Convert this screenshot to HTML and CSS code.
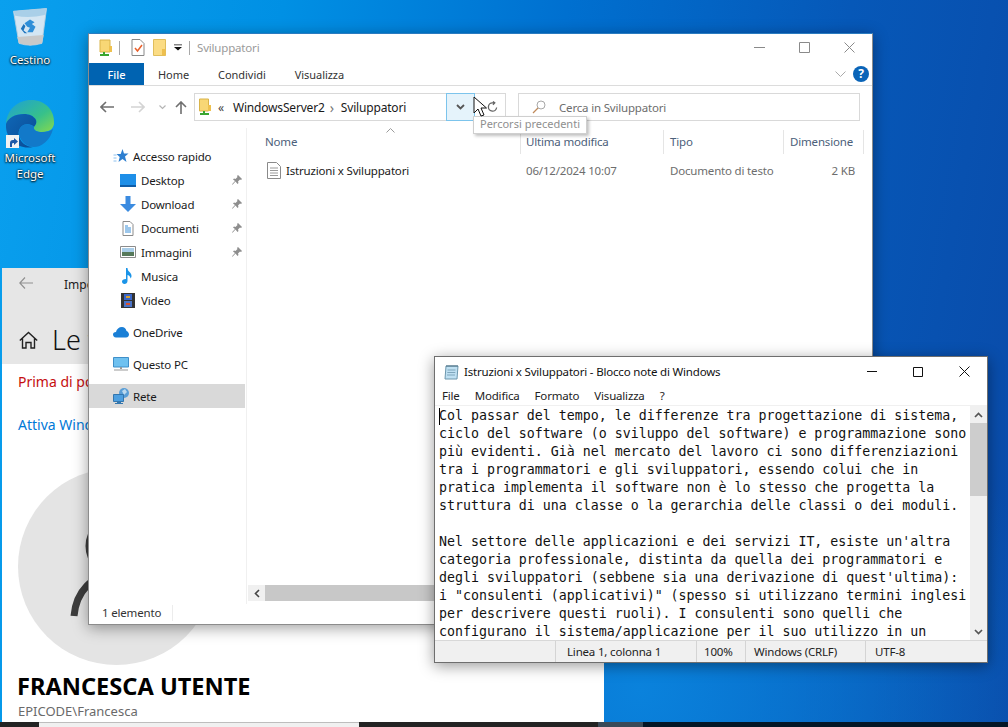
FILE: index.html
```html
<!DOCTYPE html>
<html lang="it">
<head>
<meta charset="utf-8">
<title>Desktop</title>
<link rel="stylesheet" href="styles.css">
</head>
<body>
<div class="desktop">

  <div class="dicon cestino">
    <svg width="40" height="44" viewBox="0 0 40 48"><path d="M2 9 L38 6 L33 44 Q20 48 8 44Z" fill="#d4e6f3" stroke="#b7cfe0"/><path d="M2 9 L38 6 L36 13 Q20 17 4 14Z" fill="#a9cfe8"/><path d="M6 37 L35 35 L33 44 Q20 48 8 44Z" fill="#c9c9c9"/><path d="M14 22l6-4 5 3-3 2 4 3-3 6h-6l3-5-3-1z" fill="#2f8fd8"/><path d="M13 30l4 3h-3l-4-5 3-5 2 2z" fill="#1f74bd"/></svg>
    <span>Cestino</span>
  </div>

  <div class="dicon edge">
    <svg width="50" height="50" viewBox="0 0 50 50"><defs><linearGradient id="eg1" x1="0" y1="0" x2="1" y2="1"><stop offset="0" stop-color="#1d9fd8"/><stop offset="0.6" stop-color="#37c18a"/><stop offset="1" stop-color="#86d94e"/></linearGradient><linearGradient id="eg2" x1="0" y1="0" x2="1" y2="1"><stop offset="0" stop-color="#0f67b6"/><stop offset="1" stop-color="#0a4a94"/></linearGradient></defs><path d="M1 24C2 9 13 0 26 0c14 0 24 10 23 24-1 6-6 8-12 8-5 0-9-2-8-5 1-2 3-3 2-7-2-4-7-6-12-6C10 14 3 18 1 24z" fill="url(#eg1)"/><path d="M1 24C3 18 10 14 19 14c5 0 10 2 12 6 1 4-1 5-2 7-3-3-9-4-13 0-4 4-3 12 3 17 3 2 6 3 9 3C14 50 0 40 1 24z" fill="url(#eg2)"/><path d="M16 27c4-4 10-3 13 0-1 3 3 5 8 5 5 0 9-1 11-3-3 12-12 18-19 18-3 0-6-1-9-3-6-5-8-13-4-17z" fill="#1279c9"/></svg>
    <span class="badge"><svg width="12" height="12" viewBox="0 0 12 12"><path d="M3 11V7c0-2 1-3 3-3h1V2l4 3.500-4 3.500V7H6c-1 0-1 1-1 2v2z" fill="#1e5aa8"/></svg></span>
    <span>Microsoft<br>Edge</span>
  </div>

  <section class="settings">
    <div class="set-top">
      <div class="set-title"><svg class="set-back" width="14" height="12" viewBox="0 0 14 12"><path d="M6 .5.800 6 6 11.500M1 6h13" fill="none" stroke="#8f8f8f" stroke-width="1.100"/></svg><span class="set-app">Impo</span></div>
      <div class="set-head">
        <svg width="19" height="18" viewBox="0 0 19 18" fill="none" stroke="#222" stroke-width="1.400"><path d="M.8 9.500 9.500 1.500l8.700 8M3.500 7.500V17H7v-5.500h5V17h3.500V7.500"/></svg>
        <span class="set-h1">Le t</span>
      </div>
    </div>
    <div class="set-body">
      <p class="set-warn">Prima di po</p>
      <p class="set-link">Attiva Wind</p>
      <div class="avatar">
        <svg width="197" height="197" viewBox="0 0 197 197" fill="none" stroke="#3d3d3d"><circle cx="98" cy="78" r="29" stroke-width="3"/><path d="M56 148c2-24 18-42 42-42s40 18 42 42" stroke-width="7"/></svg>
      </div>
      <div class="set-name">FRANCESCA UTENTE</div>
      <div class="set-acct">EPICODE\Francesca</div>
    </div>
  </section>

  <section class="explorer">
    <div class="ex-title">
      <svg width="14" height="18" viewBox="0 0 14 18"><path d="M1 1h10v12H1z" fill="#f8d775" stroke="#d9b44a"/><path d="M10 7h3v6h-3z" fill="#eec14f"/><path d="M5 13v2M1 16h9" stroke="#3aa52f" stroke-width="2"/></svg>
      <i class="ex-sep"></i>
      <svg width="14" height="17" viewBox="0 0 14 17"><path d="M1 .5h8l4 4v12H1z" fill="#fff" stroke="#888"/><path d="M4 9l2.500 3L11 6" fill="none" stroke="#e8602c" stroke-width="1.500"/></svg>
      <svg class="ex-folder" width="13" height="17" viewBox="0 0 13 17"><path d="M.5.500h12v16H.5z" fill="#fbdc84" stroke="#e0be5c"/><path d="M9 10h3.500v6.500H9z" fill="#eebf4e"/></svg>
      <svg class="ex-drop" width="8" height="7" viewBox="0 0 9 7"><path d="M0 0h9v1H0zM0 3h9L4.500 7z" fill="#111"/></svg>
      <i class="ex-sep sep2"></i>
      <span class="ex-name">Sviluppatori</span>
      <div class="win-btns dim">
        <svg width="11" height="11" viewBox="0 0 11 11"><path d="M0 5.500h11" stroke="#8a8a8a"/></svg>
        <svg width="11" height="11" viewBox="0 0 11 11"><path d="M.5.500h10v10H.5z" fill="none" stroke="#8a8a8a"/></svg>
        <svg width="11" height="11" viewBox="0 0 11 11"><path d="M.5.500l10 10M10.500.500l-10 10" stroke="#8a8a8a"/></svg>
      </div>
    </div>
    <div class="ex-tabs">
      <span class="tab-file">File</span>
      <span class="tab">Home</span>
      <span class="tab">Condividi</span>
      <span class="tab">Visualizza</span>
      <svg class="ribbon-caret" width="11" height="6" viewBox="0 0 11 6"><path d="M.5.500l5 5 5-5" fill="none" stroke="#aaa"/></svg>
      <span class="help">?</span>
    </div>
    <div class="ex-addr">
      <svg class="nav-a" width="14" height="12" viewBox="0 0 14 12"><path d="M6 1 1 6l5 5M1 6h13" fill="none" stroke="#6f6f6f" stroke-width="1.600"/></svg>
      <svg class="nav-b" width="14" height="12" viewBox="0 0 14 12"><path d="M8 1l5 5-5 5M13 6H0" fill="none" stroke="#d4d4d4" stroke-width="1.600"/></svg>
      <svg class="nav-c" width="7" height="5" viewBox="0 0 7 5"><path d="M.5.500l3 3 3-3" fill="none" stroke="#b5b5b5" stroke-width="1.200"/></svg>
      <svg class="nav-d" width="12" height="13" viewBox="0 0 12 13"><path d="M1 6l5-5 5 5M6 1v12" fill="none" stroke="#6f6f6f" stroke-width="1.600"/></svg>
      <div class="addr-box">
        <svg width="13" height="18" viewBox="0 0 13 18"><path d="M.5 1h9v12h-9z" fill="#f8d775" stroke="#d9b44a"/><path d="M9 7h3v6H9z" fill="#eec14f"/><path d="M5 13v2M1 16h9" stroke="#3aa52f" stroke-width="2"/></svg>
        <span class="chev">«</span>
        <span class="crumb">WindowsServer2</span>
        <span class="crumb-sep">›</span>
        <span class="crumb crumb2">Sviluppatori</span>
        <span class="addr-drop"><svg width="9" height="6" viewBox="0 0 9 6"><path d="M1 1l3.500 3.500L8 1" fill="none" stroke="#555" stroke-width="1.800"/></svg></span>
        <span class="addr-refresh"><svg width="11" height="12" viewBox="0 0 12 12"><path d="M10.500 6.500A4.500 4.500 0 1 1 6 1.500h2M6.500 0l2 1.500-2 2" fill="none" stroke="#666" stroke-width="1.400"/></svg></span>
      </div>
      <div class="search-box">
        <svg width="14" height="14" viewBox="0 0 14 14"><circle cx="9" cy="5" r="4" fill="none" stroke="#a8a8a8"/><path d="M6 8l-5 5" stroke="#c08a5a" stroke-width="1.200"/></svg>
        <span>Cerca in Sviluppatori</span>
      </div>
    </div>
    <div class="ex-main">
      <nav class="ex-nav">
        <div class="nav-row lvl1"><svg width="16" height="14" viewBox="0 0 15 14"><path d="M9 0l1.500 4.500H15L11.500 7.500 13 13 9 10l-4 3 1.200-5L3 5h4.200z" fill="#2d7fd0"/><path d="M0 6h3M0 9h3M0 12h3" stroke="#8cc0ee"/></svg><span class="nl">Accesso rapido</span></div>
        <div class="nav-row lvl2"><svg width="16" height="13" viewBox="0 0 16 13"><path d="M0 0h16v11H0z" fill="#1e8fe8"/><path d="M0 11h16v2H0z" fill="#0f5da8"/></svg><span class="nl">Desktop</span><svg class="pin" width="10" height="10" viewBox="0 0 10 10"><path d="M6 0l4 4-1 1-1-.5L6 6.500 6.500 8 5.500 9 3.500 6.500 .5 9.800 0 9.300 3 6 1 4.500l1-1L3.500 4 5.500 2 5 1z" fill="#8e8e8e"/></svg></div>
        <div class="nav-row lvl2"><svg width="16" height="16" viewBox="0 0 16 16"><path d="M5.500 0h5v8H16l-8 8-8-8h5.500z" fill="#3b8be0"/></svg><span class="nl">Download</span><svg class="pin" width="10" height="10" viewBox="0 0 10 10"><path d="M6 0l4 4-1 1-1-.5L6 6.500 6.500 8 5.500 9 3.500 6.500 .5 9.800 0 9.300 3 6 1 4.500l1-1L3.500 4 5.500 2 5 1z" fill="#8e8e8e"/></svg></div>
        <div class="nav-row lvl2"><svg width="16" height="15" viewBox="0 0 16 15"><path d="M3 .5h7l3 3v11H3z" fill="#fff" stroke="#8b8b8b"/><path d="M5 5h3M5 7h6M5 9h6M5 11h6" stroke="#3a8fd8"/></svg><span class="nl">Documenti</span><svg class="pin" width="10" height="10" viewBox="0 0 10 10"><path d="M6 0l4 4-1 1-1-.5L6 6.500 6.500 8 5.500 9 3.500 6.500 .5 9.800 0 9.300 3 6 1 4.500l1-1L3.500 4 5.500 2 5 1z" fill="#8e8e8e"/></svg></div>
        <div class="nav-row lvl2"><svg width="16" height="12" viewBox="0 0 16 12"><path d="M.5.500h15v11H.5z" fill="#fff" stroke="#8b8b8b"/><path d="M2 2h12v4H2z" fill="#a9cde8"/><path d="M2 6h12v4H2z" fill="#56795a"/></svg><span class="nl">Immagini</span><svg class="pin" width="10" height="10" viewBox="0 0 10 10"><path d="M6 0l4 4-1 1-1-.5L6 6.500 6.500 8 5.500 9 3.500 6.500 .5 9.800 0 9.300 3 6 1 4.500l1-1L3.500 4 5.500 2 5 1z" fill="#8e8e8e"/></svg></div>
        <div class="nav-row lvl2"><svg width="16" height="16" viewBox="0 0 16 16"><path d="M6 0h1.500c0 4 4 4 4 8 0 1-.5 2-1 2.500 0-2-2-3.500-3-3.500v6c0 2-1.500 3-3 3S2 15 2 13.500 3.500 11 6 11z" fill="#1a94e8"/></svg><span class="nl">Musica</span></div>
        <div class="nav-row lvl2"><svg width="16" height="15" viewBox="0 0 16 15"><path d="M1 0h14v15H1z" fill="#333"/><path d="M4 1h8v6H4z" fill="#3a67c8"/><path d="M4 8h8v6H4z" fill="#4b74c7"/><path d="M6 3h4v2H6z" fill="#d9a02c"/><path d="M6 10h4v2H6z" fill="#d8522c"/></svg><span class="nl">Video</span></div>
        <div class="nav-row lvl1 gap"><svg width="16" height="12" viewBox="0 0 16 12"><path d="M3 11.500C1 11.500 0 10 0 8.500 0 7 1 6 3 6c.5-3 3-5 6-5 2 0 4 1.500 4.500 4C15 5.500 16 7 16 8.500s-1 3-3 3z" fill="#1a7fd6"/></svg><span class="nl">OneDrive</span></div>
        <div class="nav-row lvl1 gap"><svg width="16" height="14" viewBox="0 0 16 14"><path d="M.5.500h15v9.500H.5z" fill="#6fc1f0" stroke="#3f8fc9"/><path d="M7 10h2v2H7zM1 12.500h14v1H1z" fill="#9a9a9a"/></svg><span class="nl">Questo PC</span></div>
        <div class="nav-row lvl1 gap sel"><svg width="16" height="16" viewBox="0 0 16 16"><circle cx="11" cy="5" r="5" fill="#5a9ed6"/><path d="M9 3l3-2 2 3-3 3z" fill="#bcd9ee"/><path d="M.5 6.500h10v7H.5z" fill="#4d9fe0" stroke="#3476ad"/><path d="M4 14h4v1H4zM2 15h8v1H2z" fill="#3476ad"/></svg><span class="nl">Rete</span></div>
      </nav>
      <div class="ex-list">
        <div class="sort-caret"><svg width="9" height="5" viewBox="0 0 9 5"><path d="M.5 4.500l4-4 4 4" fill="none" stroke="#9a9a9a"/></svg></div>
        <div class="col-head">
          <span class="col c1">Nome</span><span class="col c2">Ultima modifica</span><span class="col c3">Tipo</span><span class="col c4">Dimensione</span>
        </div>
        <div class="file-row">
          <span class="col c1 fname"><svg width="14" height="17" viewBox="0 0 14 17"><path d="M.5.500h9l4 4v12H.5z" fill="#fff" stroke="#8a8a8a"/><path d="M3 6h8M3 8.500h8M3 11h8M3 13.500h8" stroke="#9a9a9a"/></svg>Istruzioni x Sviluppatori</span>
          <span class="col c2 gray">06/12/2024 10:07</span>
          <span class="col c3 gray">Documento di testo</span>
          <span class="col c4 gray right">2 KB</span>
        </div>
        <div class="hscroll"><span class="hs-btn"><svg width="6" height="9" viewBox="0 0 6 9"><path d="M5 1 1.500 4.500 5 8" fill="none" stroke="#444" stroke-width="1.600"/></svg></span><span class="hs-thumb"></span></div>
      </div>
    </div>
    <div class="ex-status"><span>1 elemento</span></div>
  </section>

  <div class="tooltip">Percorsi precedenti</div>
  <svg class="cursor" width="15" height="21" viewBox="0 0 15 21"><path d="M1 1v16l4-4 3 7 3-1-3-7h5.500z" fill="#fff" stroke="#111"/></svg>

  <section class="notepad">
    <div class="np-title">
      <svg width="16" height="16" viewBox="0 0 16 16"><path d="M2 2h12l-1 13H1z" fill="#bfe0f2" stroke="#6d97ad"/><path d="M3 1v2M5 1v2M7 1v2M9 1v2M11 1v2M13 1v2" stroke="#4b6c80"/><path d="M3.500 6h8M3.300 8.500h8M3 11h8" stroke="#7fa6bc"/></svg>
      <span class="np-name">Istruzioni x Sviluppatori - Blocco note di Windows</span>
      <div class="win-btns">
        <svg width="10" height="10" viewBox="0 0 10 10"><path d="M0 4.500h10" stroke="#111"/></svg>
        <svg width="10" height="10" viewBox="0 0 10 10"><path d="M.5.500h9v9h-9z" fill="none" stroke="#111"/></svg>
        <svg width="11" height="11" viewBox="0 0 11 11"><path d="M.5.500l10 10M10.500.500l-10 10" stroke="#111"/></svg>
      </div>
    </div>
    <div class="np-menu"><span>File</span><span>Modifica</span><span>Formato</span><span>Visualizza</span><span>?</span></div>
    <div class="np-edit">
      <pre class="np-text"><span class="caret"></span>Col passar del tempo, le differenze tra progettazione di sistema,
ciclo del software (o sviluppo del software) e programmazione sono
più evidenti. Già nel mercato del lavoro ci sono differenziazioni
tra i programmatori e gli sviluppatori, essendo colui che in
pratica implementa il software non è lo stesso che progetta la
struttura di una classe o la gerarchia delle classi o dei moduli.

Nel settore delle applicazioni e dei servizi IT, esiste un'altra
categoria professionale, distinta da quella dei programmatori e
degli sviluppatori (sebbene sia una derivazione di quest'ultima):
i "consulenti (applicativi)" (spesso si utilizzano termini inglesi
per descrivere questi ruoli). I consulenti sono quelli che
configurano il sistema/applicazione per il suo utilizzo in un</pre>
      <div class="np-scroll">
        <span class="sb-btn"><svg width="9" height="6" viewBox="0 0 9 6"><path d="M1 5l3.500-3.500L8 5" fill="none" stroke="#555" stroke-width="1.700"/></svg></span>
        <span class="sb-thumb"></span>
        <span class="sb-fill"></span>
        <span class="sb-btn"><svg width="9" height="6" viewBox="0 0 9 6"><path d="M1 1l3.500 3.500L8 1" fill="none" stroke="#555" stroke-width="1.700"/></svg></span>
      </div>
    </div>
    <div class="np-status">
      <span class="st st0"></span><span class="st st1">Linea 1, colonna 1</span><span class="st st2">100%</span><span class="st st3">Windows (CRLF)</span><span class="st st4">UTF-8</span>
    </div>
  </section>

  <div class="taskbar"><span class="tb-a"></span><span class="tb-l"></span><span class="tb-a2"></span><span class="tb-b"></span><span class="tb-c"></span></div>
</div>
</body>
</html>
```

FILE: styles.css
```css
* { box-sizing: border-box; }
html, body { margin: 0; padding: 0; width: 1008px; height: 727px; overflow: hidden; }
body { font-family: "Noto Sans", "Open Sans", sans-serif; font-size: 11.5px; letter-spacing: -0.18px; color: #1a1a1a; }

.desktop {
  position: relative; width: 1008px; height: 727px; overflow: hidden;
  background:
    radial-gradient(ellipse 420px 380px at 640px 690px, #0a82dc 0%, rgba(10,130,220,0) 100%),
    linear-gradient(100deg, #0aa0ee 0%, #0090e4 25%, #0070d0 50%, #0658b8 75%, #0a4aa8 100%);
}

/* desktop icons */
.dicon { position: absolute; display: flex; flex-direction: column; align-items: center; width: 60px; color: #fff; font-size: 11.5px; letter-spacing: 0; line-height: 16px; text-align: center; text-shadow: 0 1px 2px #000, 0 0 2px #000; }
.cestino { left: 0; top: 3px; gap: 5px; }
.edge { left: 0; top: 100px; gap: 0; }
.badge { position: absolute; left: 6px; top: 35px; width: 13px; height: 13px; background: #f2f2f2; display: flex; align-items: center; justify-content: center; text-shadow: none; }

/* settings */
.settings { position: absolute; left: 2px; top: 268px; width: 602px; height: 454px; background: #fff; display: flex; flex-direction: column; letter-spacing: 0; }
.set-top { background: #e6e6e6; height: 96px; display: flex; flex-direction: column; }
.set-title { display: flex; align-items: center; height: 32px; padding-left: 17px; }
.set-back { margin-right: 31px; margin-top: -3px; flex: none; }
.set-app { color: #222; font-size: 12px; }
.set-head { display: flex; align-items: center; gap: 14px; padding: 21px 0 0 17px; }
.set-h1 { font-size: 27px; font-weight: 300; line-height: 38px; color: #111; white-space: nowrap; }
.set-body { flex: 1; padding-left: 16px; position: relative; }
.set-warn { margin: 8px 0 0; font-size: 14px; line-height: 20px; color: #c50f0f; }
.set-link { margin: 23px 0 0; font-size: 14px; line-height: 20px; color: #0078d7; }
.avatar { width: 197px; height: 197px; border-radius: 50%; background: #e4e4e4; margin-top: 33px; }
.set-name { font-size: 23.6px; font-weight: 700; line-height: 30px; color: #000; margin-top: 6px; margin-left: -1px; white-space: nowrap; }
.set-acct { font-size: 13px; line-height: 18px; color: #6a6a6a; margin-top: 1px; }

/* explorer */
.explorer { position: absolute; left: 88px; top: 33px; width: 785px; height: 592px; background: #fff; border: 1px solid #8c8c8c; border-top-color: #2a7bc0; box-shadow: 0 3px 14px rgba(0,0,0,.38); display: flex; flex-direction: column; }
.ex-title { height: 29px; display: flex; align-items: center; padding: 0 0 2px 10px; flex: none; }
.ex-sep { width: 1px; height: 14px; background: #a8a8a8; margin: 0 11px 0 6px; }
.ex-folder { margin-left: 8px; }
.ex-drop { margin-left: 8px; }
.sep2 { margin: 0 7px 0 7px; }
.ex-name { color: #9a9a9a; }
.win-btns { margin-left: auto; display: flex; align-items: center; gap: 35px; padding-right: 17px; }
.win-btns.dim { gap: 34px; }
.ex-tabs { height: 23px; display: flex; align-items: center; border-bottom: 1px solid #dcdcdc; flex: none; font-size: 11px; letter-spacing: -0.05px; padding-right: 3px; }
.tab-file { width: 55px; height: 22px; background: #0063b1; color: #fff; display: flex; align-items: center; justify-content: center; font-weight: 500; }
.tab { color: #333; margin-left: 14px; margin-right: 15px; }
.ribbon-caret { margin-left: auto; margin-right: 7px; }
.help { width: 16px; height: 16px; border-radius: 50%; background: #0a64b8; color: #fff; font-weight: 700; font-size: 12px; line-height: 16px; text-align: center; }
.ex-addr { height: 42px; display: flex; align-items: center; flex: none; padding: 0 12px 0 11px; }
.nav-a { flex: none; }
.nav-b { margin-left: 17px; flex: none; }
.nav-c { margin-left: 14px; flex: none; }
.nav-d { margin-left: 9px; flex: none; }
.addr-box { width: 312px; height: 28px; margin-left: 7px; border: 1px solid #d9d9d9; display: flex; align-items: center; padding-left: 4px; flex: none; position: relative; }
.chev { margin-left: 6px; color: #444; font-size: 12px; }
.crumb { margin-left: 9px; color: #1a1a1a; font-size: 12px; }
.crumb-sep { margin-left: 5px; color: #777; font-size: 14px; }
.crumb2 { margin-left: 7px; }
.addr-drop { margin-left: auto; width: 29px; height: 28px; border: 1px solid #7cc4ec; background: #e5f3fb; display: flex; align-items: center; justify-content: center; flex: none; }
.addr-refresh { width: 30px; height: 26px; display: flex; align-items: center; padding-left: 12px; flex: none; }
.search-box { width: 342px; height: 28px; margin-left: 12px; border: 1px solid #d9d9d9; display: flex; align-items: center; padding-left: 13px; gap: 13px; color: #6d6d6d; flex: none; }
.ex-main { flex: 1; display: flex; min-height: 0; }
.ex-nav { width: 158px; border-right: 1px solid #f0f0f0; padding-top: 16px; flex: none; }
.nav-row { height: 24px; display: flex; align-items: center; width: 156px; flex: none; }
.lvl1 { padding-left: 24px; }
.lvl1 .nl { margin-left: 4px; }
.lvl2 { padding-left: 31px; }
.lvl2 .nl { margin-left: 5px; }
.gap { margin-top: 8px; }
.sel { background: #d9d9d9; margin-left: 0; }
.pin { margin-left: auto; margin-right: 3px; }
.ex-list { flex: 1; position: relative; display: flex; flex-direction: column; min-width: 0; }
.sort-caret { position: absolute; left: 139px; top: 0; height: 5px; line-height: 0; }
.col-head { height: 24px; margin-top: 2px; display: flex; align-items: center; color: #4c607a; flex: none; }
.col { display: block; white-space: nowrap; }
.c1 { width: 273px; padding-left: 18px; }
.c2 { width: 143px; padding-left: 5px; border-left: 1px solid #e5e5e5; }
.c3 { width: 120px; padding-left: 6px; border-left: 1px solid #e5e5e5; }
.c4 { width: 81px; padding-left: 6px; border-left: 1px solid #e5e5e5; border-right: 1px solid #e5e5e5; }
.col-head .col { height: 24px; line-height: 24px; }
.c1.col { border: 0; }
.file-row { height: 24px; margin-top: 4px; display: flex; align-items: center; flex: none; }
.file-row .col { border-color: transparent; }
.gray { color: #6d6d6d; }
.right { text-align: right; padding-right: 8px; }
.fname { display: flex; align-items: center; gap: 5px; padding-left: 20px; color: #1a1a1a; }
.hscroll { margin-top: auto; margin-bottom: 3px; height: 16px; margin-left: 1px; display: flex; background: #f0f0f0; flex: none; }
.hs-btn { width: 17px; display: flex; align-items: center; justify-content: center; }
.hs-thumb { flex: 1; background: #c8c8c8; }
.ex-status { height: 20px; display: flex; align-items: center; padding: 0 0 2px 13px; color: #333; flex: none; }
.ex-status span { padding-right: 11px; border-right: 1px solid #ececec; line-height: 16px; }

/* tooltip and cursor */
.tooltip { position: absolute; left: 473px; top: 116px; width: 114px; height: 18px; background: #fff; border: 1px solid #cfcfcf; box-shadow: 2px 2px 3px rgba(0,0,0,.25); color: #8f8f8f; font-size: 11px; letter-spacing: 0; line-height: 14px; padding-left: 6px; white-space: nowrap; }
.cursor { position: absolute; left: 473px; top: 96px; }

/* notepad */
.notepad { position: absolute; left: 434px; top: 356px; width: 554px; height: 307px; background: #fff; border: 1px solid #6e6e6e; box-shadow: 0 3px 14px rgba(0,0,0,.4); display: flex; flex-direction: column; }
.np-title { height: 29px; display: flex; align-items: center; padding-left: 9px; flex: none; }
.np-name { margin-left: 4px; color: #111; white-space: nowrap; }
.notepad .win-btns { gap: 36px; padding-right: 17px; }
.np-menu { height: 19px; display: flex; align-items: center; padding-left: 7px; gap: 15px; color: #222; flex: none; }
.np-edit { flex: 1; display: flex; min-height: 0; overflow: hidden; border-top: 1px solid #f0f0f0; }
.np-text { flex: 1; margin: 0; padding: 1px 0 0 4px; font-family: "DejaVu Sans Mono", "Liberation Mono", monospace; font-size: 13.28px; letter-spacing: 0; line-height: 18px; color: #111; position: relative; overflow: hidden; }
.caret { position: absolute; left: 4px; top: 2px; width: 1px; height: 17px; background: #000; }
.np-scroll { width: 17px; background: #f0f0f0; display: flex; flex-direction: column; flex: none; }
.sb-btn { height: 17px; display: flex; align-items: center; justify-content: center; flex: none; }
.sb-thumb { height: 73px; background: #cdcdcd; flex: none; }
.sb-fill { flex: 1; }
.np-status { height: 22px; background: #f0f0f0; border-top: 1px solid #d8d8d8; display: flex; align-items: center; flex: none; color: #222; }
.st { height: 100%; display: flex; align-items: center; padding-left: 11px; border-right: 1px solid #d4d4d4; white-space: nowrap; }
.st0 { width: 121px; }
.st1 { width: 141px; }
.st2 { width: 49px; padding-left: 7px; }
.st3 { width: 120px; padding-left: 8px; }
.st4 { border-right: 0; padding-left: 9px; }

/* taskbar */
.taskbar { position: absolute; left: 0; top: 722px; width: 1008px; height: 5px; display: flex; background: #041626; }
.tb-a { width: 39px; background: #232323; }
.tb-l { width: 320px; background: #f0f0f0; border-top: 1px solid #bdbdbd; }
.tb-a2 { width: 239px; background: #232323; }
.tb-b { width: 45px; background: #3a4a58; }
.tb-c { flex: 1; }
```
